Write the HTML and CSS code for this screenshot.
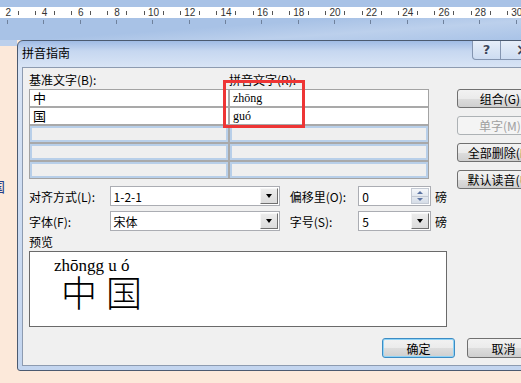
FILE: index.html
```html
<!DOCTYPE html>
<html lang="zh-CN">
<head>
    <meta charset="UTF-8">
    <title>拼音指南</title>
    <link rel="stylesheet" href="styles.css">
</head>
<body>
    <div class="toolbar">
        <div class="ruler">
            <span>2</span><span>4</span><span>6</span><span>8</span><span>10</span>
            <span>12</span><span>14</span><span>16</span><span>18</span><span>20</span>
            <span>22</span><span>24</span><span>26</span><span>28</span><span>30</span>
        </div>
        <div class="ruler-marks"></div>
    </div>
    <div class="workspace">
        <div class="page">
            <span class="page-char">国</span>
        </div>
        <div class="dialog">
            <div class="titlebar">
                <span class="title">拼音指南</span>
                <span class="cap help">?</span>
                <span class="cap close">×</span>
            </div>
            <div class="dialog-body">
                <div class="upper">
                    <div class="main">
                        <div class="labels">
                            <span class="col-label">基准文字(B):</span>
                            <span class="col-label">拼音文字(R):</span>
                        </div>
                        <div class="grid">
                            <div class="cell">中</div>
                            <div class="cell py">zhōng</div>
                            <div class="cell">国</div>
                            <div class="cell py">guó</div>
                            <div class="cell empty"></div>
                            <div class="cell empty"></div>
                            <div class="cell empty"></div>
                            <div class="cell empty"></div>
                            <div class="cell empty"></div>
                            <div class="cell empty"></div>
                        </div>
                        <div class="mark"></div>

                        <div class="field-row first">
                            <span class="lbl">对齐方式(L):</span>
                            <div class="combo wide">
                                <span class="val">1-2-1</span>
                                <span class="drop"></span>
                            </div>
                            <span class="lbl second">偏移里(O):</span>
                            <div class="combo narrow">
                                <span class="val">0</span>
                                <span class="spinbtn"><i class="up"></i><i class="down"></i></span>
                            </div>
                            <span class="unit">磅</span>
                        </div>
                        <div class="field-row">
                            <span class="lbl">字体(F):</span>
                            <div class="combo wide">
                                <span class="val">宋体</span>
                                <span class="drop"></span>
                            </div>
                            <span class="lbl second">字号(S):</span>
                            <div class="combo narrow">
                                <span class="val">5</span>
                                <span class="drop"></span>
                            </div>
                            <span class="unit">磅</span>
                        </div>

                        <div class="preview-label">预览</div>
                        <div class="preview">
                            <div class="preview-py">zhōngg u ó</div>
                            <div class="preview-han"><span>中</span><span>国</span></div>
                        </div>
                    </div>
                    <div class="side">
                        <button class="btn side-btn">组合(G)</button>
                        <button class="btn side-btn" disabled>单字(M)</button>
                        <button class="btn side-btn">全部删除(D)</button>
                        <button class="btn side-btn">默认读音(U)</button>
                    </div>
                </div>
                <div class="footer">
                    <button class="btn foot-btn default">确定</button>
                    <button class="btn foot-btn">取消</button>
                </div>
            </div>
        </div>
    </div>
</body>
</html>
```

FILE: styles.css
```css
* {
    box-sizing: border-box;
}
body {
    margin: 0;
    width: 521px;
    height: 383px;
    overflow: hidden;
    background: #fce9da;
    font-family: "Noto Sans CJK SC", "Noto Sans", sans-serif;
    font-size: 12px;
    color: #000;
}

/* ruler strip on top */
.toolbar {
    height: 40px;
    padding-top: 7px;
    background: linear-gradient(176deg, #a8c2e6 0, #a8c2e6 55%, #bcd0ec 75%, #a9c3e7 100%);
}
.ruler {
    display: flex;
    height: 11px;
    margin-left: -10px;
    background: #fff;
    font-family: "Liberation Sans", sans-serif;
    font-size: 10px;
    line-height: 11px;
    color: #333;
}
.ruler span {
    flex: 0 0 36.33px;
    text-align: center;
    background:
        linear-gradient(#555, #555) no-repeat 8.5px 4px / 1px 4px,
        linear-gradient(#555, #555) no-repeat 27.5px 4px / 1px 4px;
}
.ruler-marks {
    height: 4px;
    margin-top: 2px;
    background: repeating-linear-gradient(90deg, #6f819c 0 1px, transparent 1px 36.33px);
    background-position: 7px 0;
}

.workspace {
    display: flex;
    height: 343px;
}
.page {
    flex: 0 0 17px;
    overflow: hidden;
    padding-top: 139px;
    background: linear-gradient(#bcd0ec 0 6px, #fce9da 6px);
}
.page-char {
    display: block;
    margin-left: -9px;
    font-size: 14px;
    line-height: 14px;
    color: #25408a;
}

/* dialog window */
.dialog {
    flex: 0 0 540px;
    height: 331px;
    padding: 0 4px 4px;
    border: 1px solid #4b5a70;
    border-radius: 6px 6px 3px 3px;
    background: linear-gradient(180deg, #9fbbe5 0, #c6d7f0 10px, #d8e4f5 26px, #c3d5ef 100%);
}
.titlebar {
    display: flex;
    align-items: flex-start;
    height: 26px;
}
.title {
    width: 450px;
    line-height: 24px;
}
.cap {
    height: 19px;
    border: 1px solid #8495b0;
    border-top: 0;
    background: linear-gradient(#e6eef9, #cddcf1);
    text-align: center;
    line-height: 18px;
    font-family: "DejaVu Sans", sans-serif;
    font-weight: bold;
    font-size: 13px;
    color: #3b465c;
    text-shadow: 0 0 2px #fff;
}
.help {
    width: 29px;
    border-radius: 0 0 0 4px;
}
.close {
    width: 44px;
    border-left: 0;
    font-size: 16px;
}

.dialog-body {
    height: 299px;
    padding: 3px 0 0 6px;
    border: 1px solid #8d9bb0;
    background: #f0f0f0;
}
.upper {
    display: flex;
    gap: 10px;
}
.main {
    position: relative;
    width: 418px;
}
.labels {
    display: flex;
    height: 18px;
    line-height: 18px;
}
.col-label {
    width: 200px;
}

.grid {
    display: grid;
    grid-template-columns: 198px 198px;
    grid-auto-rows: 16px;
    gap: 2px;
    width: 400px;
    border: 1px solid #a3a3a3;
    background: #a9a9a9;
}
.cell {
    padding-left: 3px;
    background: #fff;
    font-size: 13px;
    line-height: 16px;
}
.cell.py {
    font-family: "Liberation Serif", serif;
    font-size: 12px;
}
.cell.empty {
    border: 2px solid #b8cfe9;
    background: #efefef;
}
.mark {
    position: absolute;
    left: 194px;
    top: 9px;
    width: 82px;
    height: 48px;
    border: 3px solid #ee3535;
}

.field-row {
    display: flex;
    align-items: center;
    height: 20px;
    margin-top: 5px;
}
.field-row.first {
    margin-top: 7px;
}
.lbl {
    width: 81px;
}
.lbl.second {
    width: 69px;
    margin-left: 10px;
}
.combo {
    display: flex;
    align-items: center;
    height: 20px;
    padding: 0 1px 0 3px;
    border: 1px solid #abadb3;
    background: #fff;
}
.combo.wide {
    width: 171px;
}
.combo.narrow {
    width: 73px;
}
.val {
    flex: 1;
}
.drop {
    display: flex;
    align-items: center;
    justify-content: center;
    width: 18px;
    height: 16px;
    border: 1px solid;
    border-color: #f7f7f7 #6f6f6f #6f6f6f #f7f7f7;
    background: linear-gradient(#ececec, #dcdcdc);
}
.drop::after {
    content: "";
    border-top: 4px solid #000;
    border-left: 3.5px solid transparent;
    border-right: 3.5px solid transparent;
}
.spinbtn {
    display: flex;
    flex-direction: column;
    width: 18px;
    height: 16px;
    border: 1px solid #c3c9d3;
}
.spinbtn i {
    flex: 1;
    display: flex;
    align-items: center;
    justify-content: center;
}
.spinbtn .up {
    background: linear-gradient(#f5f7fa, #e3e8ef);
    border-bottom: 1px solid #c3c9d3;
}
.spinbtn .down {
    background: linear-gradient(#e3e8ef, #d6dde7);
}
.spinbtn .up::after {
    content: "";
    border-bottom: 3px solid #5b73a2;
    border-left: 3px solid transparent;
    border-right: 3px solid transparent;
}
.spinbtn .down::after {
    content: "";
    border-top: 3px solid #5b73a2;
    border-left: 3px solid transparent;
    border-right: 3px solid transparent;
}
.unit {
    margin-left: 4px;
}

.preview-label {
    height: 20px;
    line-height: 22px;
}
.preview {
    height: 76px;
    padding: 5px 0 0 24px;
    border: 1px solid #6a6a6a;
    background: #fff;
}
.preview-py {
    font-family: "Liberation Serif", serif;
    font-size: 17px;
    line-height: 18px;
}
.preview-han {
    display: flex;
    gap: 9px;
    margin-left: 7px;
    font-size: 36px;
    font-weight: 300;
    line-height: 32px;
}

/* buttons */
.btn {
    appearance: none;
    padding: 0;
    border: 1px solid #707070;
    border-radius: 3px;
    background: linear-gradient(#f2f2f2 0, #ebebeb 50%, #dddddd 51%, #cfcfcf 100%);
    font-family: inherit;
    font-size: 12px;
    line-height: 17px;
    color: #000;
    white-space: nowrap;
}
.btn:disabled {
    border-color: #adb2b5;
    background: #f4f4f4;
    color: #a0a0a0;
}
.side {
    display: flex;
    flex-direction: column;
    gap: 8px;
    padding-top: 18px;
}
.side-btn {
    width: 86px;
    height: 19px;
}
.footer {
    display: flex;
    gap: 12px;
    margin-top: 11px;
    padding-left: 353px;
}
.foot-btn {
    width: 73px;
    height: 20px;
}
.foot-btn.default {
    border-color: #3c8cc4;
    box-shadow: inset 0 0 0 1px #8fd3f6;
}
```
